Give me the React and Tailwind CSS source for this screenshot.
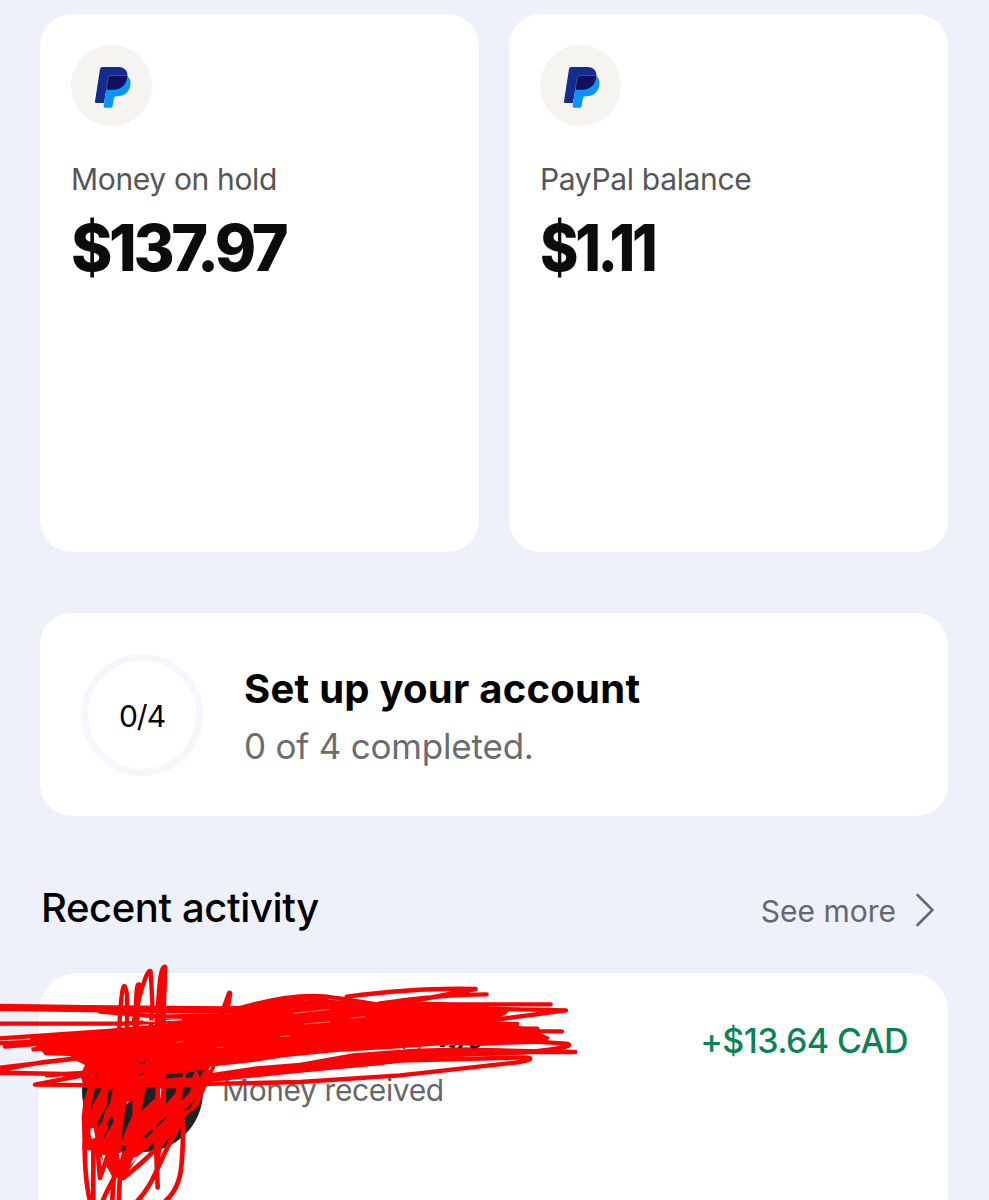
import React from "react";

const balances = [
  { id: "hold", label: "Money on hold", amount: "$137.97", fit: "tracking-[-3.4px] scale-x-[0.98]" },
  { id: "balance", label: "PayPal balance", amount: "$1.11", fit: "tracking-[-3.6px] scale-x-[0.91]" },
];

const PayPalLogo = () => (
  <svg viewBox="93 104 243 243" className="h-[81px] w-[81px] rounded-full bg-[#f5f4f0]" aria-hidden="true">
    <path d="M187 170H235C255 170 265 183 262 201C258 225 243 238 220 238H199L192 278H168Q164 278 165 273L180 176Q181 170 187 170Z" fill="#142c8e" />
    <path d="M204 204Q205 196 212 196H260C271 203 273 214 271 225C267 248 251 258 232 258H228Q223 258 222 263L218 287Q217 292 212 292H194Q190 292 191 287Z" fill="#0c93fb" />
    <path d="M204 202Q205 196 211 196H262C261 222 244 238 220 238H199Z" fill="#140f5c" />
    <path d="M199 238L205 201Q206 196 211 196H262" fill="none" stroke="#6670ab" strokeWidth="1.5" />
  </svg>
);

const BalanceCard = ({ label, amount, fit }) => (
  <div className="h-[538px] rounded-[32px] bg-white px-[31px] pt-[31px]">
    <PayPalLogo />
    <p className="mt-[32px] text-[30px] leading-[42px] tracking-[-0.35px] text-[#545658]">{label}</p>
    <p className={`mt-[11px] origin-left text-[64px] leading-[74px] font-extrabold text-[#0b0c0e] ${fit}`}>{amount}</p>
  </div>
);

const SetupCard = () => (
  <div className="mt-[61px] flex h-[203px] items-center rounded-[32px] bg-white pl-[41px]">
    <div className="flex h-[122px] w-[122px] items-center justify-center rounded-full border-[7px] border-[#f5f7fc] pt-[3px] text-[30px] tracking-[-1px] text-black">
      0/4
    </div>
    <div className="ml-[41px] pt-[7px]">
      <h2 className="text-[40px] leading-[56px] font-bold tracking-[0.25px] text-black">Set up your account</h2>
      <p className="text-[35px] leading-[58px] tracking-[-0.2px] text-[#6b6c6e]">0 of 4 completed.</p>
    </div>
  </div>
);

// Marker strokes over the sender of the payment
const Scribble = () => (
  <svg viewBox="0 0 1800 750" className="absolute top-[950px] left-0 h-[250px] w-[600px]" aria-hidden="true">
    <g fill="none" stroke="#ff0000" strokeWidth="13" strokeLinecap="round" strokeLinejoin="round">
      <path fill="#ff0000" stroke="none" d="M90 262L360 234L490 222L580 203L690 190L800 160L960 148L1090 155L1150 158L1320 155L1530 178L1520 192L1480 212L1550 226L1600 240L1650 262L1636 281L1520 284L1440 288L1350 284L1180 296L1010 306L850 322L760 336L630 350L600 410L250 400L240 378L255 345L225 330L210 318L135 316L125 303L95 298L110 290L90 280Z" />
      <path fill="#ff0000" stroke="none" d="M600 374L760 350L900 338L1060 310L1240 296L1390 292L1726 300L1500 314L1300 324L1140 346L900 368L610 398Z" />
      <path strokeWidth="22" d="M-10 172L260 176L680 180L840 176" />
      <path d="M-10 221H370L640 205" />
      <path d="M300 185L480 200L660 196" />
      <path d="M-10 266L370 240M15 290L130 280M-10 280L130 274M100 298L320 270" />
      <path d="M-10 364C110 335 190 326 270 322M-10 354L280 320M-10 368L350 375M140 376L300 365M105 404L330 360M105 404L420 406L900 396L1200 376L1560 336Q1610 326 1580 322L1200 332L610 388" />
      <path d="M1200 318L1570 308Q1740 290 1700 281L1400 262M1400 306H1726" />
      <path d="M700 180C830 140 930 128 1010 144L1140 165M720 176C840 150 920 140 980 145M1040 140C1180 122 1300 113 1427 117L1160 168M1140 160C1280 140 1380 133 1460 133M1300 163H1652M1400 175L1698 181L1480 210M1300 222H1552M1400 235L1612 236M1400 243L1686 244" />
      <path d="M355 290C360 180 365 108 373 108C384 110 382 170 380 290" />
      <path strokeWidth="19" d="M405 290C411 180 411 105 417 106M485 265L493 53C480 60 478 170 470 265" />
      <path d="M400 220C425 100 445 55 452 64L457 160L452 240" />
      <path strokeWidth="17" d="M660 210L689 130L680 180" />
    </g>
    <path d="M430 212L465 214M498 212L545 209" stroke="#ffffff" strokeWidth="4" fill="none" />
    <path d="M530 277L550 273M650 293L670 291M840 260L870 257M910 222L990 216M1050 205L1095 200M880 190L990 178" stroke="#ffb9b0" strokeWidth="2" fill="none" />
    {/* Lower loops across the avatar */}
    <g transform="translate(210 300)">
      <path d="M45 60H420L400 110L388 165L345 200L330 225L250 280L205 318L165 380L130 385L110 350L78 300L38 300L35 200L42 140Z" fill="#ff0000" />
      <path d="M38 110L54 115L42 150ZM75 115L96 115L68 165L60 182ZM116 118L128 116L122 155L108 180L113 145ZM82 218L108 170L98 212L82 232ZM125 195L131 215L100 268L100 240ZM168 165L188 150L187 195L155 270L158 230ZM228 112L257 112L255 145L213 185ZM288 115L318 115L316 130L288 162ZM340 110L365 112L358 130L335 153ZM290 72L340 70L338 80L288 86ZM350 65H375L366 83H347ZM380 61H402L390 82ZM200 41L228 34L222 43ZM200 71L222 69L216 76ZM45 84L55 75L53 84ZM72 76L82 72L78 81ZM285 202L292 201L232 262L217 264ZM153 284L168 290L165 303L153 300ZM340 184L377 148L358 178Z" fill="#202023" />
      <path d="M61 245Q62 231 71 235L76 262Q62 276 61 245ZM169 157L175 152L174 162ZM270 115L274 116L272 150ZM50 307H64V330H52ZM96 314L108 316L104 365ZM146 310L156 307L150 330ZM190 322L204 320L182 345Z" fill="#ffffff" />
      <g fill="none" stroke="#ff0000" strokeWidth="14" strokeLinecap="round" strokeLinejoin="round">
        <path d="M44 280C44 350 48 410 62 460M70 290V460M82 290L90 384L112 320M156 340C130 390 115 410 95 460M135 330L126 460M150 370L146 460" />
        <path d="M44 294H100M330 215C250 310 215 340 160 384M256 235L263 412M274 260L262 330" />
        <path d="M334 190L340 230C335 330 345 410 278 460M334 220C270 310 260 400 195 460" />
        <path strokeWidth="11" d="M430 50L388 145M80 290L110 230M183 315L210 290" />
      </g>
    </g>
    <path d="M1318 291L1322 286H1340L1332 292ZM1345 291L1350 286H1368L1363 294ZM1373 293L1379 285H1391L1384 294ZM1408 287L1420 286Q1426 292 1436 286L1442 288Q1430 298 1412 293ZM1205 296L1218 294L1214 298ZM1250 294L1264 292L1261 296Z" fill="#111111" />
  </svg>
);

const RecentActivity = () => (
  <section>
    <div className="mt-[60px] flex h-16 items-center justify-between pr-[14px] pl-px">
      <h2 className="text-[40px] font-medium tracking-[-0.4px] text-black">Recent activity</h2>
      <div className="flex items-center gap-5 pt-[7px] text-[30px] text-[#66676b]">
        See more
        <svg viewBox="0 0 18 34" className="-mt-1 h-[34px] w-[18px]" fill="none" stroke="currentColor" strokeWidth="2.6" strokeLinecap="round">
          <path d="M1.5 2L16.5 17L1.5 32" />
        </svg>
      </div>
    </div>
    <div className="-ml-px mt-[33px] flex h-[300px] rounded-[38px] bg-white pt-[40px] pr-[40px] pl-[43px]">
      <div className="mt-[18px] h-[121px] w-[121px] rounded-full bg-[#202023]" />
      <p className="mt-[56px] ml-[19px] text-[30px] leading-[42px] tracking-[-0.4px] text-[#66676a]">Money received</p>
      <p className="ml-auto text-[34px] leading-[56px] font-medium tracking-[-0.6px] text-[#0a8457]">+$13.64 CAD</p>
    </div>
  </section>
);

const App = () => (
  <main className="relative h-[1200px] w-[989px] overflow-hidden bg-[#eef1fa] px-10 pt-[14px] pr-[41px] font-[Inter,sans-serif]">
    <div className="grid grid-cols-2 gap-[30px]">
      {balances.map((item) => (
        <BalanceCard key={item.id} label={item.label} amount={item.amount} fit={item.fit} />
      ))}
    </div>
    <SetupCard />
    <RecentActivity />
    <Scribble />
  </main>
);

export default App;
